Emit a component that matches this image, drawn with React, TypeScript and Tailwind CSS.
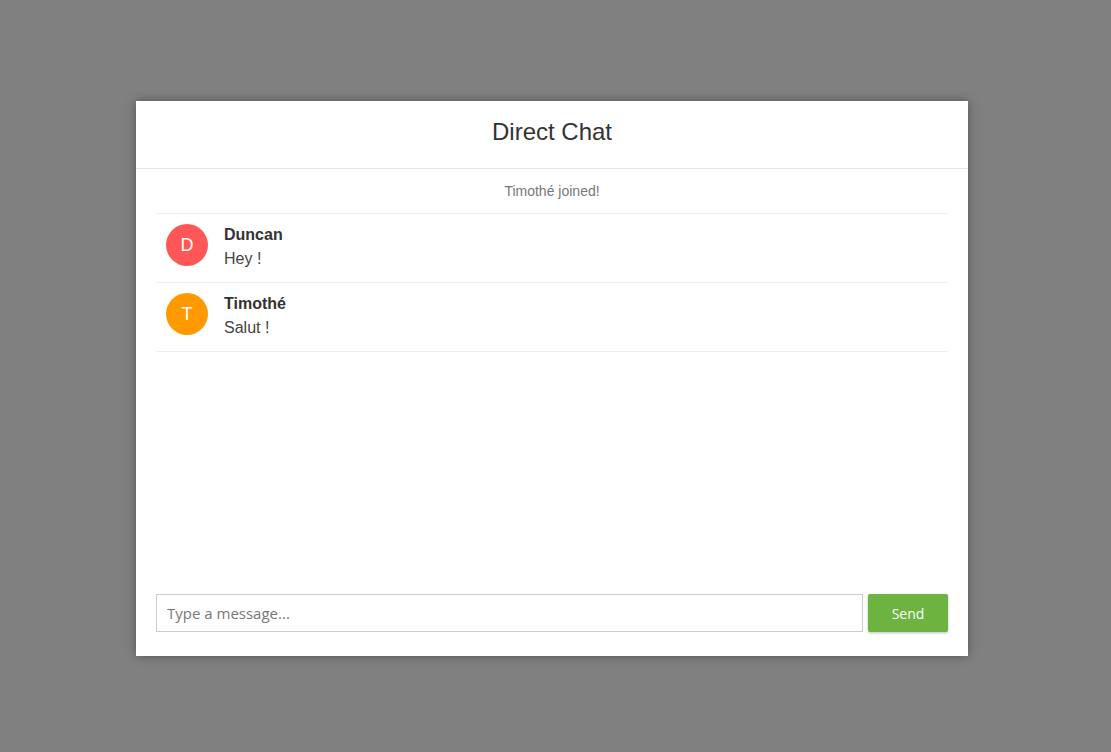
import { useState } from 'react'

interface Message {
  id: number
  author: string
  text: string
  color: string
}

const messages: Message[] = [
  { id: 1, author: 'Duncan', text: 'Hey !', color: 'bg-[#ff5757]' },
  { id: 2, author: 'Timothé', text: 'Salut !', color: 'bg-[#ff9900]' }
]

export default function App() {
  const [draft, setDraft] = useState('')

  return (
    <div className="min-h-[752px] w-full bg-[#808080] pt-[101px] pl-[136px] font-['Liberation_Sans',Arial,sans-serif]">
      <div className="flex h-[555px] w-[832px] flex-col bg-white shadow-[0_0_10px_rgba(0,0,0,0.35)]">
        {/* Header */}
        <div className="flex h-[68px] items-center justify-center border-b border-[#e6e6e6] pb-[6px]">
          <h1 className="text-[24px] text-[#333]">Direct Chat</h1>
        </div>

        {/* Messages */}
        <div className="flex-1 px-5">
          <div className="flex h-[45px] items-center justify-center border-b border-[#eee] text-[14px] text-[#777]">
            Timothé joined!
          </div>
          {messages.map((m) => (
            <div key={m.id} className="flex h-[69px] items-start border-b border-[#eee] pt-[9px] pl-[10px]">
              <div
                className={`mt-[1px] flex h-[42px] w-[42px] items-center justify-center rounded-full text-[18px] text-white ${m.color}`}
              >
                {m.author[0]}
              </div>
              <div className="ml-4 flex flex-col">
                <span className="text-[16px] leading-[23px] font-bold text-[#333]">{m.author}</span>
                <span className="pt-[1px] text-[16px] leading-[24px] text-[#444]">{m.text}</span>
              </div>
            </div>
          ))}
        </div>

        {/* Composer */}
        <div className="flex gap-[5px] px-5 pb-6">
          <input
            value={draft}
            onChange={(e) => setDraft(e.target.value)}
            placeholder="Type a message..."
            className="h-[38px] flex-1 border border-[#ccc] px-[10px] font-['Open_Sans',sans-serif] text-[15px] text-[#333] outline-none placeholder:text-[#777]"
          />
          <button className="h-[38px] w-[80px] rounded-[2px] bg-[#6db33f] font-['Open_Sans',sans-serif] text-[14px] text-white shadow-[0_1px_3px_rgba(0,0,0,0.25)]">
            Send
          </button>
        </div>
      </div>
    </div>
  )
}
